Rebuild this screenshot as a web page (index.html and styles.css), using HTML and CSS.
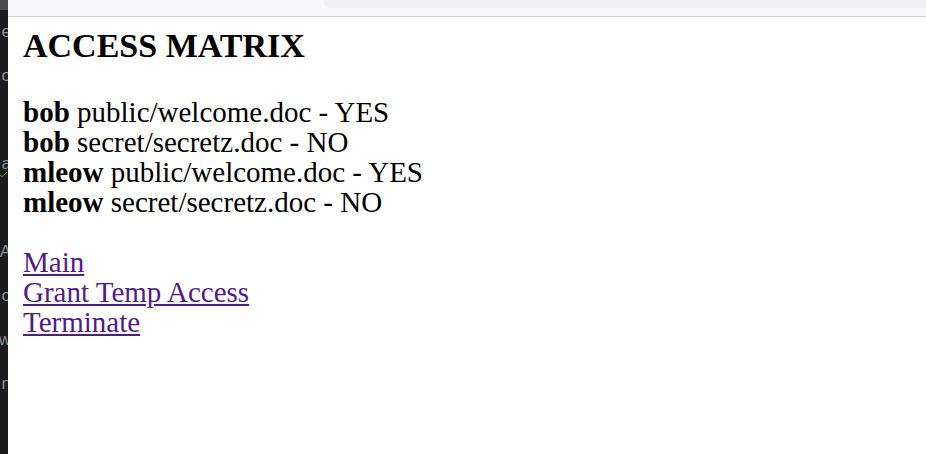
FILE: index.html
```html
<!DOCTYPE html>
<html>
<head>
<meta charset="utf-8">
<title>Access Matrix</title>
<link rel="stylesheet" href="styles.css">
</head>
<body>
<div class="side">
  <div class="side-top"></div>
  <div class="side-rows">
    <div class="side-row"><span class="g">e</span></div>
    <div class="side-row"><span class="g">o</span></div>
    <div class="side-row"></div>
    <div class="side-row"><span class="g">a</span><svg class="check" width="8" height="6" viewBox="0 0 8 6"><path d="M0 4 L2 5.5 L7 1" fill="none" stroke="#3fa34d" stroke-width="1"/></svg></div>
    <div class="side-row"></div>
    <div class="side-row"><span class="g">A</span></div>
    <div class="side-row"><span class="g">o</span></div>
    <div class="side-row"><span class="g">w</span></div>
    <div class="side-row"><span class="g">n</span></div>
  </div>
</div>
<div class="window">
  <div class="chrome"><div class="tab"></div></div>
  <div class="content">
    <h1 class="title">ACCESS MATRIX</h1>
    <div class="matrix">
      <div class="row"><b>bob</b> public/welcome.doc - YES</div>
      <div class="row"><b>bob</b> secret/secretz.doc - NO</div>
      <div class="row"><b>mleow</b> public/welcome.doc - YES</div>
      <div class="row"><b>mleow</b> secret/secretz.doc - NO</div>
    </div>
    <div class="links">
      <a class="link" href="#main">Main</a>
      <a class="link" href="#grant">Grant Temp Access</a>
      <a class="link" href="#terminate">Terminate</a>
    </div>
  </div>
</div>
</body>
</html>
```

FILE: styles.css
```css
html, body {
  margin: 0;
  padding: 0;
  height: 100%;
}
body {
  display: flex;
  background: #ffffff;
  font-family: "Liberation Serif", "Times New Roman", serif;
  color: #000;
  overflow: hidden;
}
.side {
  width: 8px;
  flex: none;
  background: #1c1c1e;
  overflow: hidden;
  display: flex;
  flex-direction: column;
}
.side-top {
  height: 10px;
  background: #4a4a4c;
  flex: none;
}
.side-rows {
  display: flex;
  flex-direction: column;
  padding-top: 12px;
}
.side-row {
  height: 44px;
  display: flex;
  flex-direction: column;
  align-items: flex-end;
  justify-content: flex-start;
}
.g {
  font-family: "Liberation Sans", Arial, sans-serif;
  font-size: 17px;
  line-height: 20px;
  color: #8e8e93;
  margin-right: -3px;
}
.check {
  display: block;
  margin-top: -3px;
}
.window {
  flex: 1;
  display: flex;
  flex-direction: column;
}
.chrome {
  height: 16px;
  background: #f8f8fa;
  border-bottom: 1px solid #cfcfd1;
  display: flex;
  justify-content: flex-end;
  flex: none;
}
.tab {
  width: 602px;
  height: 8px;
  background: #eeeef2;
  border-bottom-left-radius: 7px;
}
.content {
  padding: 10px 15px 0 15px;
}
.title {
  margin: 0 0 32px 0;
  font-size: 34px;
  line-height: 38px;
  font-weight: bold;
}
.matrix {
  font-size: 29px;
  line-height: 30px;
  margin-bottom: 30px;
}
.links {
  display: flex;
  flex-direction: column;
  align-items: flex-start;
  font-size: 29px;
  line-height: 30px;
}
.link {
  color: #4f1c8a;
  text-decoration: underline;
}
```
